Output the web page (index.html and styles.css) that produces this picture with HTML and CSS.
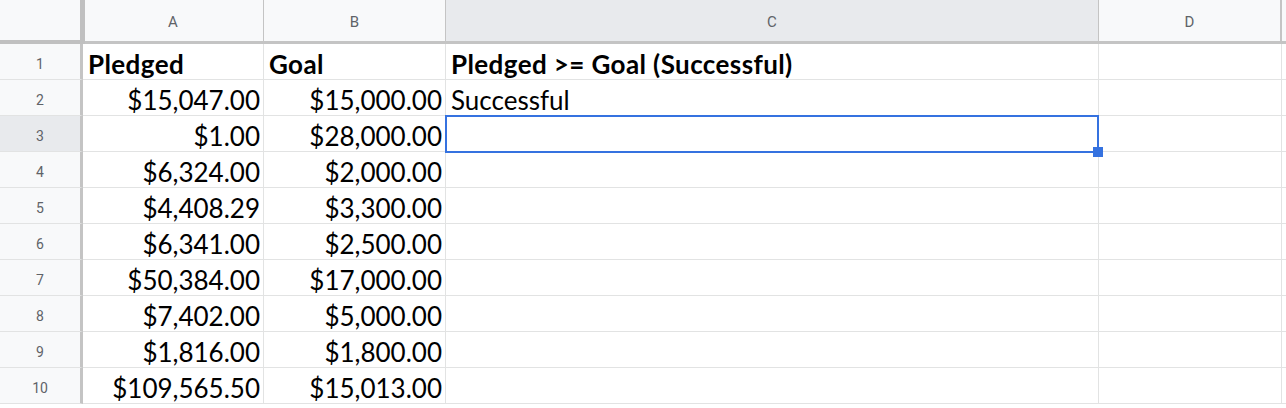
FILE: index.html
```html
<!DOCTYPE html>
<html>
<head>
<meta charset="utf-8">
<link rel="stylesheet" href="styles.css">
</head>
<body>
<div class="sheet">
  <div class="corner"></div>
  <div class="colhead">A</div>
  <div class="colhead">B</div>
  <div class="colhead sel">C</div>
  <div class="colhead last">D</div>
  <div class="colhead rest"></div>

  <div class="rowhead">1</div>
  <div class="cell bold">Pledged</div>
  <div class="cell bold">Goal</div>
  <div class="cell bold">Pledged &gt;= Goal (Successful)</div>
  <div class="cell"></div>
  <div class="cell rest"></div>

  <div class="rowhead">2</div>
  <div class="cell num">$15,047.00</div>
  <div class="cell num">$15,000.00</div>
  <div class="cell">Successful</div>
  <div class="cell"></div>
  <div class="cell rest"></div>

  <div class="rowhead sel">3</div>
  <div class="cell num">$1.00</div>
  <div class="cell num">$28,000.00</div>
  <div class="cell active"><span class="handle"></span></div>
  <div class="cell"></div>
  <div class="cell rest"></div>

  <div class="rowhead">4</div>
  <div class="cell num">$6,324.00</div>
  <div class="cell num">$2,000.00</div>
  <div class="cell"></div>
  <div class="cell"></div>
  <div class="cell rest"></div>

  <div class="rowhead">5</div>
  <div class="cell num">$4,408.29</div>
  <div class="cell num">$3,300.00</div>
  <div class="cell"></div>
  <div class="cell"></div>
  <div class="cell rest"></div>

  <div class="rowhead">6</div>
  <div class="cell num">$6,341.00</div>
  <div class="cell num">$2,500.00</div>
  <div class="cell"></div>
  <div class="cell"></div>
  <div class="cell rest"></div>

  <div class="rowhead">7</div>
  <div class="cell num">$50,384.00</div>
  <div class="cell num">$17,000.00</div>
  <div class="cell"></div>
  <div class="cell"></div>
  <div class="cell rest"></div>

  <div class="rowhead">8</div>
  <div class="cell num">$7,402.00</div>
  <div class="cell num">$5,000.00</div>
  <div class="cell"></div>
  <div class="cell"></div>
  <div class="cell rest"></div>

  <div class="rowhead">9</div>
  <div class="cell num">$1,816.00</div>
  <div class="cell num">$1,800.00</div>
  <div class="cell"></div>
  <div class="cell"></div>
  <div class="cell rest"></div>

  <div class="rowhead">10</div>
  <div class="cell num">$109,565.50</div>
  <div class="cell num">$15,013.00</div>
  <div class="cell"></div>
  <div class="cell"></div>
  <div class="cell rest"></div>
</div>
</body>
</html>
```
FILE: styles.css
```css
html, body {
  margin: 0;
  padding: 0;
  background: #ffffff;
}
.sheet {
  display: grid;
  grid-template-columns: 83px 181px 182px 653px 183px 1fr;
  grid-template-rows: 44px repeat(10, 36px);
  width: 1286px;
  overflow: hidden;
}
.corner {
  background: #f8f9fa;
  border-right: 5px solid #c0c0c0;
  border-bottom: 4px solid #c0c0c0;
  margin-right: -2px;
  position: relative;
  z-index: 1;
}
.colhead {
  background: #f8f9fa;
  border-right: 1px solid #c4c4c4;
  border-bottom: 3px solid #c4c4c4;
  display: flex;
  align-items: center;
  justify-content: center;
  font-family: Roboto, "Liberation Sans", Arial, sans-serif;
  font-size: 15px;
  color: #5f6368;
  padding-top: 2px;
}
.colhead.sel {
  background: #e8eaed;
}
.colhead.last {
  border-right: 2px solid #c4c4c4;
}
.colhead.rest {
  border-right: none;
}
.rowhead {
  background: #f8f9fa;
  border-right: 3px solid #c4c4c4;
  border-bottom: 1px solid #e2e3e3;
  display: flex;
  align-items: center;
  justify-content: center;
  font-family: Roboto, "Liberation Sans", Arial, sans-serif;
  font-size: 14px;
  color: #5f6368;
  padding-top: 4px;
}
.rowhead.sel {
  background: #e8eaed;
}
.cell {
  border-right: 1px solid #e2e3e3;
  border-bottom: 1px solid #e2e3e3;
  font-family: Lato, "Open Sans", sans-serif;
  font-size: 26px;
  line-height: 30px;
  color: #000000;
  display: flex;
  align-items: flex-end;
  padding: 0 4px 0 5px;
  white-space: nowrap;
  overflow: visible;
}
.cell.rest {
  border-right: none;
}
.cell.bold {
  font-weight: 700;
  letter-spacing: 0.4px;
}
.cell.num {
  justify-content: flex-end;
  padding-right: 3px;
}
.cell.active {
  position: relative;
}
.cell.active::after {
  content: "";
  position: absolute;
  left: -1px;
  top: -1px;
  right: -1px;
  bottom: -2px;
  border: 2px solid #3572e0;
}
.handle {
  position: absolute;
  right: -5px;
  bottom: -6px;
  width: 10px;
  height: 10px;
  background: #3572e0;
  z-index: 2;
}
```
